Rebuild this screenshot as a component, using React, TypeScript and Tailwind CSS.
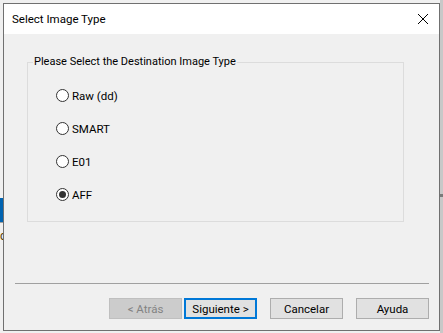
import React from "react";

const font = { fontFamily: 'Roboto, "Noto Sans", sans-serif' };

function Radio({ label, checked }: { label: string; checked?: boolean }) {
  return (
    <div className="flex h-[33px] items-center">
      <span className="relative flex h-[13px] w-[13px] items-center justify-center rounded-full border border-[#333333] bg-white">
        {checked && <span className="h-[7px] w-[7px] rounded-full bg-[#333333]" />}
      </span>
      <span className="ml-[3px] text-[11.5px] leading-[16px] text-black">{label}</span>
    </div>
  );
}

function Btn({ label, disabled, primary, className = "" }: { label: string; disabled?: boolean; primary?: boolean; className?: string }) {
  const base = "flex h-[21px] w-[73px] items-center justify-center text-[11.5px] leading-[16px]";
  if (disabled)
    return <div className={`${base} border border-[#bfbfbf] bg-[#cccccc] text-[#838383] ${className}`}>{label}</div>;
  if (primary)
    return <div className={`${base} border-2 border-[#0078d7] bg-[#e1e1e1] text-black ${className}`}>{label}</div>;
  return <div className={`${base} border border-[#adadad] bg-[#e1e1e1] text-black ${className}`}>{label}</div>;
}

export default function App() {
  return (
    <div className="relative h-[333px] w-[443px] overflow-hidden bg-[#f0f0f0]" style={font}>
      {/* background items behind window */}
      <div className="absolute left-0 top-[198px] h-[24px] w-[3px] bg-[#0063b1]" />
      <div className="absolute left-0 top-[222px] h-[1px] w-[3px] bg-[#a0a0a0]" />
      <div className="absolute left-0 top-[228px] w-[3px] overflow-hidden text-[12px] leading-[16px] text-[#5a3a00]">
        <span className="ml-[-3px]">ic</span>
      </div>
      <div className="absolute right-0 top-0 h-[333px] w-[3px] bg-[#c8c8c8]" />
      <div className="absolute right-0 top-[194px] h-[3px] w-[3px] bg-[#7a7a7a]" />

      <div className="absolute left-[3px] top-[3px] flex h-[328px] w-[437px] flex-col border border-[#707070] bg-[#f0f0f0]">
        {/* title bar */}
        <div className="flex h-[30px] shrink-0 items-center bg-white pl-[8px] pr-[8px]">
          <span className="text-[11.5px] leading-[16px] text-black">Select Image Type</span>
          <svg className="ml-auto mr-[2px]" width="12" height="12" viewBox="0 0 12 12">
            <path d="M1 1 L11 11 M11 1 L1 11" stroke="#000" strokeWidth="1" fill="none" />
          </svg>
        </div>
        {/* client */}
        <div className="flex flex-1 flex-col">
          <div className="relative ml-[23px] mt-[28px] h-[160px] w-[377px] border border-[#dcdcdc]">
            <div className="absolute left-[5px] top-[-9px] bg-[#f0f0f0] px-[1px] text-[11px] leading-[16px] text-black">
              Please Select the Destination Image Type
            </div>
            <div className="flex flex-col pl-[28px] pt-[16px]">
              <Radio label="Raw (dd)" />
              <Radio label="SMART" />
              <Radio label="E01" />
              <Radio label="AFF" checked />
            </div>
          </div>
          <div className="ml-[11px] mt-[61px] h-[1px] w-[414px] bg-[#a0a0a0]" />
          <div className="ml-[105px] mt-[14px] flex">
            <Btn label="< Atrás" disabled />
            <Btn label="Siguiente >" primary className="ml-[2px]" />
            <Btn label="Cancelar" className="ml-[13px]" />
            <Btn label="Ayuda" className="ml-[13px]" />
          </div>
        </div>
      </div>
    </div>
  );
}
